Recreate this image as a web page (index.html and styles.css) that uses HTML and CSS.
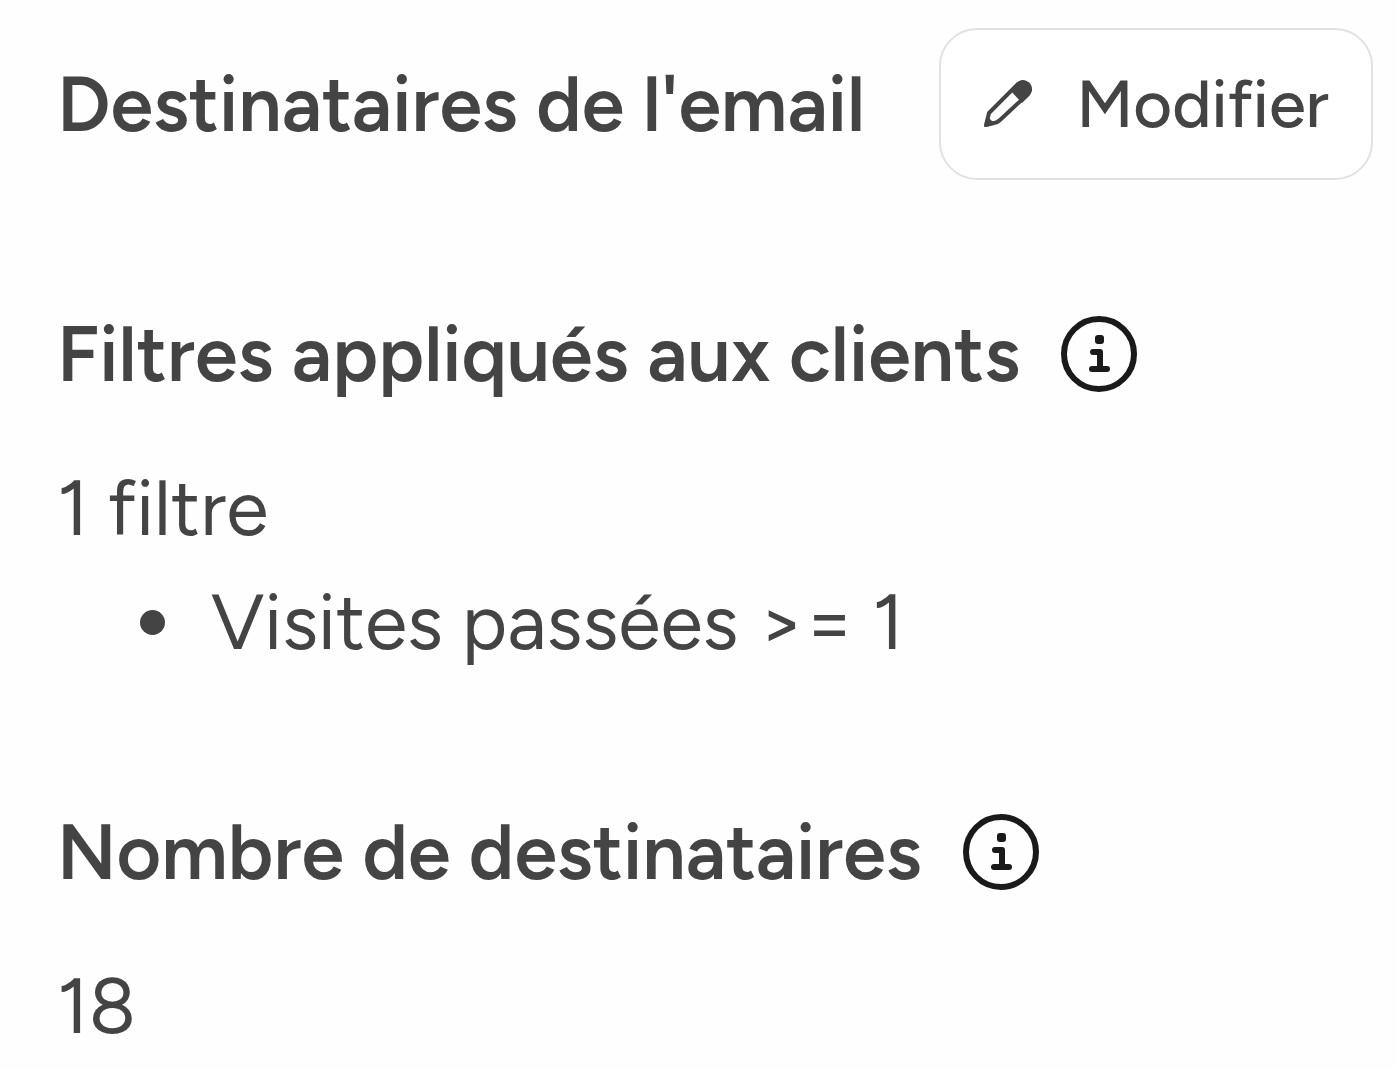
FILE: index.html
```
<!DOCTYPE html>
<html lang="fr">

<head>
    <meta charset="UTF-8">
    <meta name="viewport" content="width=device-width, initial-scale=1.0">
    <title>Destinataires de l'email</title>
    <link rel="stylesheet" href="styles.css">
</head>

<body>
    <main class="recipients">
        <header class="recipients-header">
            <h1>Destinataires de l'email</h1>
            <button type="button" class="edit-button">
                <svg class="icon-pencil" viewBox="0 0 50 50" aria-hidden="true">
                    <path d="M3 46 L6 34 L35 5 Q40 1 45 5 Q49 10 45 15 L17 41 Q14 44 11 44 Z" fill="none" stroke="currentColor" stroke-width="4" stroke-linejoin="round"/>
                    <path d="M27 11 L35 3 Q40 -1 46 4 Q51 10 47 16 L39 24 Z" fill="currentColor"/>
                    <path d="M1 48 L5 38 Q8 42 13 44 Z" fill="currentColor"/>
                </svg>
                Modifier
            </button>
        </header>

        <!-- Filtres -->
        <section class="section">
            <div class="section-title">
                <h2>Filtres appliqués aux clients</h2>
                <svg class="icon-info" viewBox="0 0 78 78" role="img" aria-label="Information">
                    <circle cx="39" cy="39" r="35" fill="none" stroke="currentColor" stroke-width="6"/>
                    <rect x="35" y="20" width="9" height="9" rx="3" fill="currentColor"/>
                    <path d="M33 37 H40 V54 M32 54 H47" fill="none" stroke="currentColor" stroke-width="6" stroke-linecap="round" stroke-linejoin="round"/>
                </svg>
            </div>
            <p>1 filtre</p>
            <ul class="filter-list">
                <li>Visites passées &gt;= 1</li>
            </ul>
        </section>

        <!-- Nombre de destinataires -->
        <section class="section">
            <div class="section-title">
                <h2>Nombre de destinataires</h2>
                <svg class="icon-info" viewBox="0 0 78 78" role="img" aria-label="Information">
                    <circle cx="39" cy="39" r="35" fill="none" stroke="currentColor" stroke-width="6"/>
                    <rect x="35" y="20" width="9" height="9" rx="3" fill="currentColor"/>
                    <path d="M33 37 H40 V54 M32 54 H47" fill="none" stroke="currentColor" stroke-width="6" stroke-linecap="round" stroke-linejoin="round"/>
                </svg>
            </div>
            <p>18</p>
        </section>
    </main>
</body>

</html>
```

FILE: styles.css
```
body {
    margin: 0;
    background-color: #fefefe;
    color: #444;
    font-family: Figtree, Lato, sans-serif;
    font-size: 77px;
    line-height: 114px;
}

h1,
h2,
p,
ul {
    margin: 0;
}

h1,
h2 {
    font-size: 77px;
    font-weight: 600;
}

.recipients {
    padding: 28px 23px 0 57px;
}

.recipients-header {
    display: flex;
    align-items: center;
    justify-content: space-between;
    margin-bottom: 117px;
    white-space: nowrap;
}

.edit-button {
    display: flex;
    align-items: center;
    gap: 43px;
    padding: 18px 42px;
    border: 2px solid #e2e2e2;
    border-radius: 38px;
    background-color: #fff;
    color: #444;
    font-family: inherit;
    font-size: 67px;
    font-weight: 500;
    line-height: 112px;
    cursor: pointer;
}

.section {
    margin-bottom: 116px;
}

.section:last-child {
    margin-bottom: 0;
}

.section-title {
    display: flex;
    align-items: center;
    gap: 40px;
    margin-bottom: 40px;
}

.filter-list {
    padding-left: 83px;
    list-style: none;
}

.filter-list li {
    display: flex;
    align-items: center;
    gap: 46px;
}

/* puce ronde */
.filter-list li::before {
    content: "";
    width: 25px;
    height: 25px;
    border-radius: 50%;
    background-color: #444;
}

.icon-pencil {
    width: 50px;
    height: 50px;
}

.icon-info {
    width: 78px;
    height: 78px;
    color: #1a1a1a;
}
```
